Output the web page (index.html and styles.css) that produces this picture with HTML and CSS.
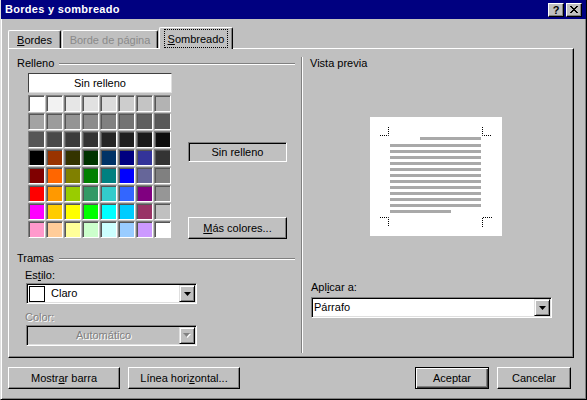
FILE: index.html
```html
<!DOCTYPE html>
<html>

<head>
  <meta name="viewport" content="width=device-width, initial-scale=1.0">
  <link rel="stylesheet" href="styles.css">
</head>

<body>
  <div class="window">
    <!-- Title bar -->
    <div class="titlebar">
      <span class="title">Bordes y sombreado</span>
      <div class="caption-buttons">
        <span class="cap-btn help">?</span>
        <span class="cap-btn">
          <svg width="8" height="7" viewBox="0 0 8 7">
            <path d="M0 0h2v1h1v1h2v-1h1v-1h2v1h-1v1h-1v1h-1v1h1v1h1v1h1v1h-2v-1h-1v-1h-2v1h-1v1h-2v-1h1v-1h1v-1h1v-1h-1v-1h-1v-1h-1z" fill="#000" />
          </svg>
        </span>
      </div>
    </div>

    <div class="content">
      <!-- Tabs -->
      <div class="tabs">
        <div class="tab tab-bordes"><u>B</u>ordes</div>
        <div class="tab tab-pagina tab-disabled">Borde de página</div>
        <div class="tab tab-sombreado active"><span class="focus"><u>S</u>ombreado</span></div>
      </div>

      <div class="panel">
        <!-- Left column -->
        <div class="col-left">
          <div class="group-head"><span>Relleno</span><i class="etch"></i></div>

          <div class="fill-row">
            <div class="palette">
              <div class="no-fill">Sin relleno</div>
              <div class="swatches" id="swatches"></div>
            </div>
            <div class="fill-side">
              <div class="current">Sin relleno</div>
              <div class="btn more-btn"><u>M</u>ás colores...</div>
            </div>
          </div>

          <div class="group-head tramas-head"><span>Tramas</span><i class="etch"></i></div>
          <div class="field-label">Es<u>t</u>ilo:</div>
          <div class="combo style-combo">
            <span class="combo-swatch"></span>
            <span class="combo-text">Claro</span>
            <span class="combo-btn"><svg width="7" height="4" viewBox="0 0 7 4"><path d="M0 0h7L3.5 4z" fill="#000" /></svg></span>
          </div>
          <div class="field-label color-label disabled">Color:</div>
          <div class="combo style-combo combo-disabled">
            <span class="combo-text centered disabled">Automático</span>
            <span class="combo-btn"><svg width="8" height="5" viewBox="0 0 8 5"><path d="M1 1h7L4.5 5z" fill="#fff" /><path d="M0 0h7L3.5 4z" fill="#808080" /></svg></span>
          </div>
        </div>

        <div class="separator"></div>

        <!-- Right column -->
        <div class="col-right">
          <div class="preview-label">Vista previa</div>
          <svg class="preview" width="132" height="119" viewBox="0 0 132 119">
            <rect width="132" height="119" fill="#fff" />
            <g fill="#a9a9a9">
              <rect x="50" y="20" width="61" height="3" />
              <rect x="20" y="27" width="91" height="3" />
              <rect x="20" y="33" width="91" height="3" />
              <rect x="20" y="39" width="91" height="3" />
              <rect x="20" y="45" width="91" height="3" />
              <rect x="20" y="51" width="91" height="3" />
              <rect x="20" y="57" width="91" height="3" />
              <rect x="20" y="63" width="91" height="3" />
              <rect x="20" y="69" width="91" height="3" />
              <rect x="20" y="75" width="91" height="3" />
              <rect x="20" y="81" width="91" height="3" />
              <rect x="20" y="87" width="91" height="3" />
              <rect x="20" y="93" width="61" height="3" />
            </g>
            <!-- corner marks -->
            <g stroke="#000" stroke-width="1" stroke-dasharray="1 1" fill="none">
              <path d="M18.5 10v8.5H10" />
              <path d="M112.5 10v8.5H122" />
              <path d="M10 100.5h8.5V110" />
              <path d="M122 100.5h-9.5V110" />
            </g>
          </svg>
          <div class="apply-label">Apl<u>i</u>car a:</div>
          <div class="combo apply-combo">
            <span class="combo-text">Párrafo</span>
            <span class="combo-btn"><svg width="7" height="4" viewBox="0 0 7 4"><path d="M0 0h7L3.5 4z" fill="#000" /></svg></span>
          </div>
        </div>
      </div>

      <!-- Bottom buttons -->
      <div class="footer">
        <div class="btn btn-wide">Mostr<u>a</u>r barra</div>
        <div class="btn btn-wide">Línea hori<u>z</u>ontal...</div>
        <div class="btn btn-ok default">Aceptar</div>
        <div class="btn btn-ok">Cancelar</div>
      </div>
    </div>
  </div>

  <script>
    // Office shading palette, 8 x 8
    const colors = [
      '#ffffff', '#f2f2f2', '#e6e6e6', '#e1e1e1', '#dbdbdb', '#cdcdcd', '#c4c4c4', '#b3b3b3',
      '#a3a3a3', '#9c9c9c', '#949494', '#8c8c8c', '#808080', '#737373', '#5f5f5f', '#595959',
      '#565656', '#494949', '#3b3b3b', '#333333', '#262626', '#202020', '#1a1a1a', '#0d0d0d',
      '#000000', '#993300', '#333300', '#003300', '#003366', '#000080', '#333399', '#333333',
      '#800000', '#ff6600', '#808000', '#008000', '#008080', '#0000ff', '#666699', '#808080',
      '#ff0000', '#ff9900', '#99cc00', '#339966', '#33cccc', '#3366ff', '#800080', '#969696',
      '#ff00ff', '#ffcc00', '#ffff00', '#00ff00', '#00ffff', '#00ccff', '#993366', '#c0c0c0',
      '#ff99cc', '#ffcc99', '#ffff99', '#ccffcc', '#ccffff', '#99ccff', '#cc99ff', '#ffffff'
    ];
    const grid = document.getElementById('swatches');
    colors.forEach((c) => {
      const cell = document.createElement('div');
      cell.className = 'swatch';
      cell.style.background = c; // colour comes from the palette data
      grid.appendChild(cell);
    });
  </script>
</body>
</html>
```

FILE: styles.css
```css
/* Win98 style dialog */
body {
  margin: 0;
  font-family: "Liberation Sans", Arial, sans-serif;
  font-size: 11px;
  line-height: 13px;
  color: #000;
  background-color: #c0c0c0;
}

.window {
  width: 587px;
  height: 400px;
  box-sizing: border-box;
  background-color: #c0c0c0;
  border-left: 1px solid #dfdfdf;
  border-right: 1px solid #000;
  border-bottom: 1px solid #000;
  box-shadow: inset 1px 0 #fff, inset -1px -1px #808080;
}

u {
  text-decoration: underline;
  text-underline-offset: 1px;
}

/* Title bar */
.titlebar {
  height: 19px;
  display: flex;
  align-items: center;
  padding: 0 4px 0 4px;
  background-color: #000080;
}

.title {
  color: #fff;
  font-weight: bold;
  font-size: 11px;
  letter-spacing: 0.3px;
}

.caption-buttons {
  margin-left: auto;
  display: flex;
  gap: 2px;
}

.cap-btn {
  width: 16px;
  height: 14px;
  box-sizing: border-box;
  display: flex;
  align-items: center;
  justify-content: center;
  background-color: #c0c0c0;
  border-top: 1px solid #fff;
  border-left: 1px solid #fff;
  border-right: 1px solid #000;
  border-bottom: 1px solid #000;
  box-shadow: inset -1px -1px #808080;
}

.cap-btn.help {
  font-weight: bold;
  font-size: 11px;
  line-height: 12px;
}

/* Main area */
.content {
  padding: 8px 12px 0 7px;
}

.tabs {
  display: flex;
  align-items: flex-end;
  height: 21px;
}

.tab {
  height: 18px;
  box-sizing: border-box;
  padding-top: 3px;
  text-align: center;
  border-top: 1px solid #fff;
  border-left: 1px solid #fff;
  border-right: 1px solid #000;
  border-radius: 2px 2px 0 0;
  box-shadow: inset -1px 0 #808080;
}

.tab-bordes {
  width: 53px;
}

.tab-pagina {
  width: 96px;
  margin-left: 1px;
}

.tab-sombreado {
  width: 74px;
  margin-left: 1px;
}

.tab-disabled {
  color: #8a8a8a;
}

.tab.active {
  height: 22px;
  padding-top: 1px;
  margin-bottom: -1px;
  position: relative;
  z-index: 1;
  background-color: #c0c0c0;
}

.focus {
  display: inline-block;
  padding: 3px 3px 1px;
  border: 1px dotted #000;
}

.disabled {
  color: #808080;
  text-shadow: 1px 1px 0 #fff;
}

.panel {
  display: flex;
  height: 310px;
  box-sizing: border-box;
  border-top: 1px solid #fff;
  border-left: 1px solid #fff;
  border-right: 1px solid #000;
  border-bottom: 1px solid #000;
  box-shadow: inset -1px -1px #808080;
}

.col-left {
  width: 292px;
  box-sizing: border-box;
  padding: 8px 6px 0 8px;
}

.group-head {
  display: flex;
  align-items: center;
  gap: 5px;
}

.etch {
  flex: 1;
  height: 0;
  border-top: 1px solid #808080;
  border-bottom: 1px solid #fff;
}

.fill-row {
  display: flex;
  margin-top: 3px;
  margin-left: 11px;
}

.palette {
  width: 144px;
}

.no-fill {
  height: 20px;
  box-sizing: border-box;
  display: flex;
  align-items: center;
  justify-content: center;
  background-color: #fff;
  border-top: 1px solid #404040;
  border-left: 1px solid #404040;
  border-right: 1px solid #dfdfdf;
  border-bottom: 1px solid #dfdfdf;
  margin-bottom: 2px;
}

.swatches {
  display: grid;
  grid-template-columns: repeat(8, 17px);
  grid-auto-rows: 17px;
  gap: 1px;
}

.swatch {
  box-sizing: border-box;
  border-top: 1px solid #808080;
  border-left: 1px solid #808080;
  border-right: 1px solid #fff;
  border-bottom: 1px solid #fff;
  box-shadow: inset 1px 1px #555;
}

.fill-side {
  margin-left: 16px;
  padding-top: 69px;
}

.current {
  width: 99px;
  height: 20px;
  box-sizing: border-box;
  display: flex;
  align-items: center;
  justify-content: center;
  border-top: 1px solid #808080;
  border-left: 1px solid #808080;
  border-right: 1px solid #fff;
  border-bottom: 1px solid #fff;
  box-shadow: inset 1px 1px #000;
}

.btn {
  height: 22px;
  box-sizing: border-box;
  display: flex;
  align-items: center;
  justify-content: center;
  background-color: #c0c0c0;
  border-top: 1px solid #fff;
  border-left: 1px solid #fff;
  border-right: 1px solid #000;
  border-bottom: 1px solid #000;
  box-shadow: inset -1px -1px #808080;
}

.more-btn {
  width: 99px;
  margin-top: 55px;
}

.tramas-head {
  margin-top: 13px;
}

.field-label {
  margin: 4px 0 1px 8px;
}

.color-label {
  margin-top: 7px;
}

.combo {
  height: 21px;
  box-sizing: border-box;
  display: flex;
  align-items: center;
  padding: 1px;
  background-color: #fff;
  border-top: 1px solid #808080;
  border-left: 1px solid #808080;
  border-right: 1px solid #fff;
  border-bottom: 1px solid #fff;
  box-shadow: inset 1px 1px #000, inset -1px -1px #dfdfdf;
}

.style-combo {
  width: 171px;
  margin-left: 9px;
}

.combo-disabled {
  background-color: #c0c0c0;
}

.combo-swatch {
  width: 16px;
  height: 16px;
  box-sizing: border-box;
  margin-left: 1px;
  border: 1px solid #000;
  background-color: #fff;
}

.combo-text {
  margin-left: 6px;
}

.combo-text.centered {
  flex: 1;
  margin-left: 0;
  text-align: center;
}

.combo-btn {
  width: 16px;
  height: 17px;
  box-sizing: border-box;
  margin-left: auto;
  display: flex;
  align-items: center;
  justify-content: center;
  background-color: #c0c0c0;
  border-top: 1px solid #dfdfdf;
  border-left: 1px solid #dfdfdf;
  border-right: 1px solid #000;
  border-bottom: 1px solid #000;
  box-shadow: inset 1px 1px #fff, inset -1px -1px #808080;
}

.separator {
  width: 0;
  margin: 8px 0 4px;
  border-left: 1px solid #808080;
  border-right: 1px solid #fff;
}

.col-right {
  flex: 1;
  padding-top: 8px;
}

.preview-label {
  margin-left: 7px;
}

.preview {
  display: block;
  margin: 47px 0 0 67px;
}

.apply-label {
  margin: 45px 0 3px 8px;
}

.apply-combo {
  width: 241px;
  margin-left: 8px;
}

.apply-combo .combo-text {
  margin-left: 1px;
}

/* Bottom buttons */
.footer {
  display: flex;
  gap: 8px;
  margin-top: 9px;
  padding-right: 3px;
}

.btn-wide {
  width: 112px;
}

.btn-ok {
  width: 74px;
}

.btn-ok.default {
  margin-left: auto;
  border: 1px solid #000;
  box-shadow: inset 1px 1px #fff, inset -1px -1px #404040, inset -2px -2px #808080;
}
```
